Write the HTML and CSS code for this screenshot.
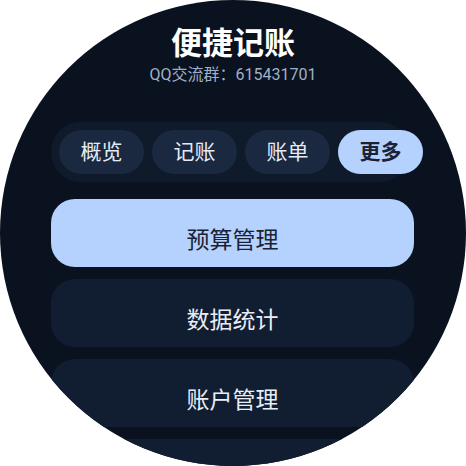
FILE: index.html
```html
<!DOCTYPE html>
<html lang="zh">
<head>
<meta charset="utf-8">
<link rel="stylesheet" href="styles.css">
</head>
<body>
<div class="watch">
  <header class="header">
    <h1 class="title">便捷记账</h1>
    <p class="subtitle">QQ交流群：615431701</p>
  </header>
  <nav class="tabs">
    <div class="tab">概览</div>
    <div class="tab">记账</div>
    <div class="tab">账单</div>
    <div class="tab tab-active">更多</div>
  </nav>
  <div class="list">
    <div class="item item-active">预算管理</div>
    <div class="item">数据统计</div>
    <div class="item item-cut">账户管理</div>
    <div class="item item-next"></div>
  </div>
</div>
</body>
</html>
```
FILE: styles.css
```css
html, body {
  margin: 0;
  padding: 0;
  background: #ffffff;
}
.watch {
  width: 466px;
  height: 466px;
  border-radius: 50%;
  overflow: hidden;
  background: #0a1220;
  font-family: "Noto Sans CJK SC", "Noto Sans", sans-serif;
  display: flex;
  flex-direction: column;
}
.header {
  padding-top: 21px;
  text-align: center;
}
.title {
  margin: 0;
  font-size: 31px;
  line-height: 40px;
  font-weight: 700;
  color: #ffffff;
}
.subtitle {
  margin: 4px 0 0;
  font-family: Roboto, "Noto Sans CJK SC", sans-serif;
  font-size: 16px;
  line-height: 20px;
  color: #a0b0c7;
}
.tabs {
  margin: 37px 0 0 51px;
  width: 359px;
  height: 60px;
  box-sizing: border-box;
  padding: 8px;
  border-radius: 30px;
  background: #0f1a2b;
  display: flex;
  gap: 8px;
}
.tab {
  flex: 0 0 85px;
  height: 44px;
  box-sizing: border-box;
  padding-bottom: 4px;
  border-radius: 22px;
  background: #1a2840;
  color: #e4ebf5;
  font-size: 21px;
  line-height: 40px;
  text-align: center;
}
.tab-active {
  background: #b5d1fe;
  color: #1a2233;
  font-weight: 700;
}
.list {
  margin: 17px 0 0 51px;
  width: 363px;
  display: flex;
  flex-direction: column;
  gap: 12px;
}
.item {
  flex: 0 0 68px;
  height: 68px;
  box-sizing: border-box;
  padding-top: 10px;
  border-radius: 24px;
  background: #111d31;
  color: #e8eef8;
  font-size: 23px;
  line-height: 58px;
  text-align: center;
}
.item-active {
  background: #b5d1fe;
  color: #1a2233;
}
.item-cut {
  border-radius: 24px 24px 0 0;
}
.item-next {
  border-radius: 0;
}
```
